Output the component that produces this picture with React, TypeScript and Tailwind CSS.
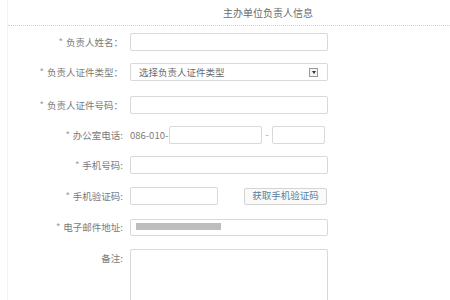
import React from 'react';

const font = { fontFamily: '"Noto Sans CJK SC", "Liberation Sans", sans-serif' };

function Label({ text, req = true }: { text: string; req?: boolean }) {
  return (
    <div className="w-[122px] shrink-0 text-right text-[9.5px] leading-[18px] text-[#7a7a7a]">
      {req && <span className="mr-[3px] text-[#999]">*</span>}
      {text}
    </div>
  );
}

function Box({ w = 'w-[198px]' }: { w?: string }) {
  return <div className={`${w} h-[18px] border border-[#d9d9d9] bg-white rounded-[2px]`} />;
}

export default function App() {
  return (
    <div className="w-[450px] h-[300px] overflow-hidden bg-white" style={font}>
      <div className="ml-[7px] h-full border-l border-[#f3f3f3]">
        {/* 标题 */}
        <div className="pt-[6px] pl-[215px] text-[10px] leading-[14px] text-[#6a6a6a]">主办单位负责人信息</div>
        <div className="mt-[5px] border-t border-dotted border-[#d2d2d2]" />

        <div className="-ml-[7px] flex flex-col">
          <div className="mt-[7px] flex items-center gap-[7px]">
            <Label text="负责人姓名：" />
            <Box />
          </div>

          <div className="mt-[12px] flex items-center gap-[7px]">
            <Label text="负责人证件类型：" />
            <div className="w-[198px] h-[18px] border border-[#d9d9d9] bg-white rounded-[2px] flex items-center justify-between pl-[8px] pr-[9px]">
              <span className="text-[9.5px] text-[#6a6a6a]">选择负责人证件类型</span>
              <div className="w-[9px] h-[9px] border border-[#999] bg-[#f4f4f4] flex items-center justify-center">
                <div className="w-0 h-0 border-l-[2.5px] border-r-[2.5px] border-t-[3px] border-l-transparent border-r-transparent border-t-[#333]" />
              </div>
            </div>
          </div>

          <div className="mt-[15px] flex items-center gap-[7px]">
            <Label text="负责人证件号码：" />
            <Box />
          </div>

          <div className="mt-[12px] flex items-center gap-[7px]">
            <Label text="办公室电话:" />
            <div className="flex items-center">
              <span className="text-[9.5px] text-[#7a7a7a] w-[39px]">086-010-</span>
              <Box w="w-[93px]" />
              <span className="w-[10px] text-center text-[9px] text-[#999]">-</span>
              <Box w="w-[53px]" />
            </div>
          </div>

          <div className="mt-[12px] flex items-center gap-[7px]">
            <Label text="手机号码:" />
            <Box />
          </div>

          <div className="mt-[13px] flex items-center gap-[7px]">
            <Label text="手机验证码:" />
            <Box w="w-[88px]" />
            <button className="ml-[19px] w-[83px] h-[17px] border border-[#d4d4d4] bg-[#fafafa] rounded-[2px] text-[9.5px] leading-none text-[#5a82a0]">
              获取手机验证码
            </button>
          </div>

          <div className="mt-[13px] flex items-center gap-[7px]">
            <Label text="电子邮件地址:" />
            <div className="w-[198px] h-[17px] border border-[#d9d9d9] bg-white rounded-[2px] pl-[5px] pt-[3px]">
              <div className="w-[85px] h-[7px] bg-[#bdbdbd]" />
            </div>
          </div>

          <div className="mt-[13px] flex items-start gap-[7px]">
            <Label text="备注:" req={false} />
            <div className="w-[198px] h-[80px] border border-[#d9d9d9] bg-white rounded-[2px]" />
          </div>
        </div>
      </div>
    </div>
  );
}
